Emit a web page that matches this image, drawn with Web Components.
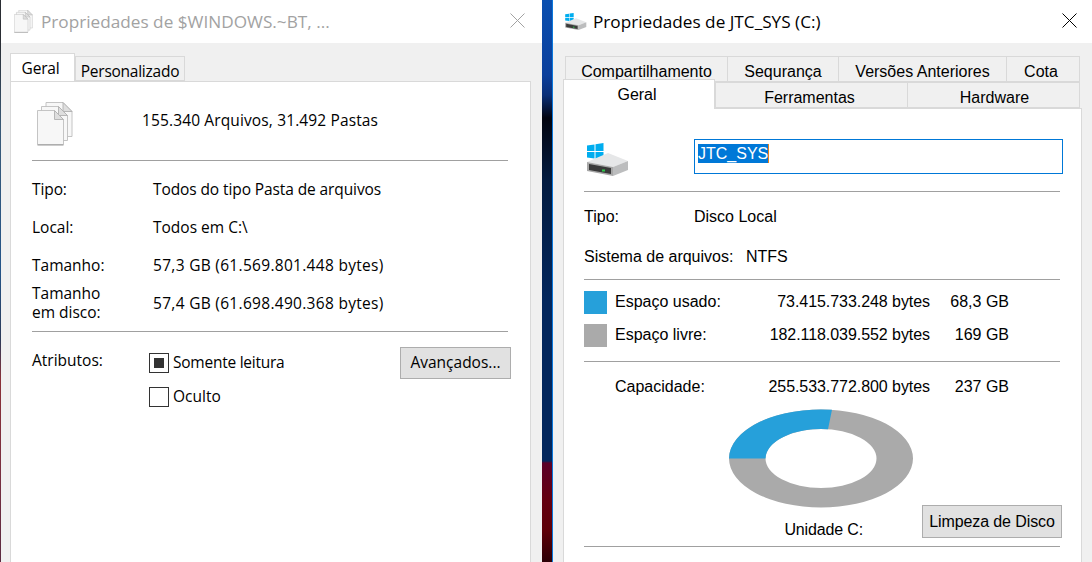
<!DOCTYPE html>
<html lang="pt">
<head>
<meta charset="utf-8">
<title>Propriedades</title>
<style>
  html, body { margin: 0; height: 100%; overflow: hidden; }
  body {
    display: flex;
    width: 1092px;
    height: 562px;
    background: linear-gradient(180deg, #0a4fb0 0, #0b3f9c 75px, #0a2f78 95px, #02040f 118px, #021b40 180px, #02265c 300px, #02265c 461px, #5a0028 463px, #640010 500px, #5e0008 530px, #2c0006 562px);
  }
  .left-edge {
    flex: 0 0 1px;
    background: linear-gradient(180deg, #2a2d33 0, #2a2d33 40px, #3a5a78 130px, #245488 270px, #2c3a58 340px, #8a3038 380px, #7a3040 470px, #5a2a40 562px);
  }
  .gap { flex: 0 0 10px; }
</style>
</head>
<body>
<div class="left-edge"></div>

<prop-window style="width:541px" inactive heading="Propriedades de $WINDOWS.~BT, ...">
  <files-icon slot="icon" size="small" style="margin-left:1px"></files-icon>

  <tab-strip style="margin:10px 0 0 9px;height:28px;align-items:flex-end;font-family:'Open Sans',sans-serif;font-size:15.5px">
    <prop-tab active style="width:65px;height:28px;padding:1px 4px 0 0;letter-spacing:-.2px">Geral</prop-tab>
    <prop-tab style="width:110px;height:25px;padding-top:4px;letter-spacing:-.25px">Personalizado</prop-tab>
  </tab-strip>

  <prop-panel style="margin-left:9px;width:521px;font-family:'Open Sans',sans-serif;font-size:15.5px">
    <div style="display:flex;align-items:center;height:78px;padding-left:26px;box-sizing:border-box">
      <files-icon style="margin:6px 69px 0 0"></files-icon>
      <span style="padding-bottom:2px;letter-spacing:.13px">155.340 Arquivos, 31.492 Pastas</span>
    </div>
    <prop-rule style="margin-left:21px;width:476px"></prop-rule>
    <prop-row label-width="121" style="margin:18px 0 0 21px;height:20px;letter-spacing:-.1px">
      <span slot="label">Tipo:</span>Todos do tipo Pasta de arquivos
    </prop-row>
    <prop-row label-width="121" style="margin:18px 0 0 21px;height:20px">
      <span slot="label">Local:</span>Todos em C:\
    </prop-row>
    <prop-row label-width="121" style="margin:18px 0 0 21px;height:20px">
      <span slot="label">Tamanho:</span><span style="letter-spacing:.3px">57,3 GB (61.569.801.448 bytes)</span>
    </prop-row>
    <prop-row label-width="121" style="margin:9px 0 0 21px;height:38px">
      <span slot="label" style="display:block;line-height:19px">Tamanho<br>em disco:</span><span style="letter-spacing:.3px">57,4 GB (61.698.490.368 bytes)</span>
    </prop-row>
    <prop-rule style="margin:9px 0 0 21px;width:476px"></prop-rule>
    <div style="display:flex;align-items:flex-start;margin:15px 0 0 21px;width:479px">
      <span style="width:117px;padding-top:2px">Atributos:</span>
      <div style="display:flex;flex-direction:column;gap:14px;padding-top:6px;flex:1">
        <check-box checked style="letter-spacing:-.25px">Somente leitura</check-box>
        <check-box>Oculto</check-box>
      </div>
      <push-button style="width:111px;height:32px;padding-bottom:2px">Avançados...</push-button>
    </div>
  </prop-panel>
</prop-window>

<div class="gap"></div>

<prop-window style="width:540px;border-left:1px solid #0a78dc" heading="Propriedades de JTC_SYS (C:)" close-gap="15">
  <drive-icon slot="icon" size="small"></drive-icon>

  <tab-strip style="margin:13px 0 0 12px;height:26px;font-family:'Liberation Sans',sans-serif;font-size:16px">
    <prop-tab style="width:163px;height:26px;padding-top:6px">Compartilhamento</prop-tab>
    <prop-tab style="width:112px;height:26px;margin-left:-1px;padding-top:6px">Sequrança</prop-tab>
    <prop-tab style="width:169px;height:26px;margin-left:-1px;padding-top:6px">Versões Anteriores</prop-tab>
    <prop-tab style="width:74px;height:26px;margin-left:-1px;padding:6px 4px 0 0">Cota</prop-tab>
  </tab-strip>
  <tab-strip style="margin:0 0 0 10px;height:26px;font-family:'Liberation Sans',sans-serif;font-size:16px">
    <prop-tab active style="width:152px;height:30px;margin-top:-3px;padding:1px 4px 0 0">Geral</prop-tab>
    <prop-tab style="width:193px;height:26px;padding:6px 4px 0 0">Ferramentas</prop-tab>
    <prop-tab style="width:173px;height:26px;margin-left:-1px;padding:6px 0 0 2px">Hardware</prop-tab>
  </tab-strip>

  <prop-panel style="margin-left:10px;width:519px;font-family:'Liberation Sans',sans-serif;font-size:16px">
    <div style="display:flex;align-items:flex-start;margin:30px 0 0 23px;height:35px">
      <drive-icon style="margin:4px 65px 0 0"></drive-icon>
      <name-field style="width:369px">JTC_SYS</name-field>
    </div>
    <prop-rule style="margin:17px 0 0 20px;width:476px"></prop-rule>
    <prop-row label-width="110" style="margin:15px 0 0 20px;height:20px">
      <span slot="label">Tipo:</span>Disco Local
    </prop-row>
    <prop-row label-width="162" style="margin:20px 0 0 20px;height:20px">
      <span slot="label">Sistema de arquivos:</span>NTFS
    </prop-row>
    <prop-rule style="margin:12px 0 0 20px;width:476px"></prop-rule>
    <space-row color="#26a0da" bytes="73.415.733.248 bytes" size="68,3 GB" style="margin-top:11px">Espaço usado:</space-row>
    <space-row color="#aaaaaa" bytes="182.118.039.552 bytes" size="169 GB" style="margin-top:10px">Espaço livre:</space-row>
    <prop-rule style="margin:14px 0 0 20px;width:476px"></prop-rule>
    <space-row bytes="255.533.772.800 bytes" size="237 GB" style="margin-top:14px">Capacidade:</space-row>
    <usage-donut style="margin:10px 0 0 164px"></usage-donut>
    <div style="display:flex;align-items:flex-end;margin:-4px 0 0 0;height:33px">
      <span style="width:358px;text-align:right;box-sizing:border-box;padding-right:59px;line-height:18px;margin-bottom:-1px;letter-spacing:-.15px;white-space:nowrap">Unidade C:</span>
      <push-button style="width:140px;height:33px;letter-spacing:-.1px">Limpeza de Disco</push-button>
    </div>
    <prop-rule style="margin:8px 0 0 20px;width:476px"></prop-rule>
  </prop-panel>
</prop-window>

<script>
// shared helper, every element just stamps its css + html in an open shadow root
class ShadowEl extends HTMLElement {
  constructor() {
    super();
    this.attachShadow({ mode: 'open' });
  }
  stamp(css, html) {
    this.shadowRoot.innerHTML = `<style>${css}</style>${html}`;
  }
}

class PropWindow extends ShadowEl {
  connectedCallback() {
    const inactive = this.hasAttribute('inactive');
    const closeGap = this.getAttribute('close-gap') || 17;
    this.stamp(`
      :host { display: flex; flex-direction: column; flex: none; height: 562px; overflow: hidden;
        background: #f0f0f0; box-sizing: border-box; color: #000; }
      .bar { display: flex; align-items: center; height: 43px; background: #fff; flex: none; }
      .icon { display: flex; width: 40px; padding-left: 12px; box-sizing: border-box; }
      .title { flex: 1; font: 17.2px 'Open Sans', sans-serif; white-space: nowrap;
        color: ${inactive ? '#a2a2a2' : '#000'}; }
      svg { flex: none; margin: 0 ${closeGap}px 2px 0; }
    `, `
      <div class="bar">
        <div class="icon"><slot name="icon"></slot></div>
        <div class="title">${this.getAttribute('heading')}</div>
        <svg width="15" height="15" viewBox="0 0 15 15"><path d="M.5.5l14 14M14.500.5l-14 14" stroke="${inactive ? '#a2a2a2' : '#000'}" fill="none"/></svg>
      </div>
      <slot></slot>
    `);
  }
}

class TabStrip extends ShadowEl {
  connectedCallback() {
    this.stamp(`:host { display: flex; flex: none; position: relative; }`, `<slot></slot>`);
  }
}

class PropTab extends ShadowEl {
  connectedCallback() {
    const active = this.hasAttribute('active');
    this.stamp(`
      :host { display: flex; align-items: center; justify-content: center; flex: none; box-sizing: border-box;
        border: 1px solid #d9d9d9; ${active ? 'border-bottom: 0; background: #fff; z-index: 2;' : 'background: #f0f0f0;'}
        white-space: nowrap; position: relative; }
    `, `<slot></slot>`);
  }
}

class PropPanel extends ShadowEl {
  connectedCallback() {
    this.stamp(`
      :host { display: block; flex: 1; box-sizing: border-box; background: #fff; border: 1px solid #d9d9d9; border-bottom: 0; }
    `, `<slot></slot>`);
  }
}

class PropRule extends ShadowEl {
  connectedCallback() {
    this.stamp(`:host { display: block; height: 1px; background: #a0a0a0; }`, ``);
  }
}

class PropRow extends ShadowEl {
  connectedCallback() {
    this.stamp(`
      :host { display: flex; align-items: center; white-space: nowrap; }
      .label { width: ${this.getAttribute('label-width')}px; flex: none; }
    `, `<div class="label"><slot name="label"></slot></div><div><slot></slot></div>`);
  }
}

class SpaceRow extends ShadowEl {
  connectedCallback() {
    const color = this.getAttribute('color');
    this.stamp(`
      :host { display: flex; align-items: center; height: 23px; padding-left: 20px; white-space: nowrap; }
      .swatch { width: 23px; height: 23px; flex: none; margin-right: 8px; }
      .name, .bytes, .size { flex: none; padding-bottom: 2px; }
      .name { width: 140px; }
      .bytes { width: 175px; text-align: right; letter-spacing: -.06px; }
      .size { width: 79px; text-align: right; }
    `, `
      <div class="swatch" style="background:${color || 'transparent'}"></div>
      <div class="name"><slot></slot></div>
      <div class="bytes">${this.getAttribute('bytes')}</div>
      <div class="size">${this.getAttribute('size')}</div>
    `);
  }
}

class CheckBox extends ShadowEl {
  connectedCallback() {
    this.stamp(`
      :host { display: flex; align-items: center; height: 20px; gap: 4px; white-space: nowrap; }
      .box { width: 20px; height: 20px; box-sizing: border-box; border: 1px solid #333; background: #fff;
        display: flex; align-items: center; justify-content: center; flex: none; }
      .mark { width: 10px; height: 10px; background: #333; }
      span { padding-bottom: 3px; }
    `, `<div class="box">${this.hasAttribute('checked') ? '<div class="mark"></div>' : ''}</div><span><slot></slot></span>`);
  }
}

class PushButton extends ShadowEl {
  connectedCallback() {
    this.stamp(`
      :host { display: flex; align-items: center; justify-content: center; flex: none; box-sizing: border-box;
        background: #e1e1e1; border: 1px solid #adadad; white-space: nowrap; }
    `, `<slot></slot>`);
  }
}

class NameField extends ShadowEl {
  connectedCallback() {
    this.stamp(`
      :host { display: flex; align-items: flex-start; height: 35px; box-sizing: border-box; border: 1px solid #0078d7;
        padding: 4px 0 0 3px; flex: none; background: #fff; }
      .sel { background: #0078d7; color: #fff; height: 19px; line-height: 19px; border-right: 1px solid #e8801a; }
    `, `<span class="sel"><slot></slot></span>`);
  }
}

class UsageDonut extends ShadowEl {
  connectedCallback() {
    this.stamp(`:host { display: block; width: 186px; height: 100px; } svg { display: block; }`, `
      <svg width="186" height="100" viewBox="0 0 186 100">
        <path fill-rule="evenodd" fill="#aaaaaa" d="M1 49.5a92 49 0 1 0 184 0a92 49 0 1 0-184 0zM37.500 49.500a55.500 29.500 0 1 1 111 0a55.500 29.500 0 1 1-111 0z"/>
        <path fill="#26a0da" d="M1 49.500A92 49 0 0 1 104 .8L100 20.300A55.500 29.500 0 0 0 37.500 49.500z"/>
      </svg>`);
  }
}

class FilesIcon extends ShadowEl {
  connectedCallback() {
    const small = this.getAttribute('size') === 'small';
    const w = small ? 19 : 36, h = small ? 23 : 44;
    const sheet = (x, y) => `<path d="M${x} ${y}h17l9 9v25h-26z" fill="#f7f7f7" stroke="#bdbdbd" stroke-width=".9"/><path d="M${x + 17} ${y}v9h9z" fill="#dedede" stroke="#b0b0b0" stroke-width=".9"/>`;
    this.stamp(`:host { display: block; flex: none; width: ${w}px; height: ${h}px; } svg { display: block; }`, `
      <svg width="${w}" height="${h}" viewBox="0 0 36 44">
        ${sheet(9, .5)}${sheet(4.500, 4.500)}${sheet(.5, 8.500)}
        <path d="M.5 43h26" stroke="#999" stroke-width="1"/>
      </svg>`);
  }
}

class DriveIcon extends ShadowEl {
  connectedCallback() {
    const small = this.getAttribute('size') === 'small';
    const w = small ? 22 : 42, h = small ? 17 : 33;
    this.stamp(`:host { display: block; flex: none; width: ${w}px; height: ${h}px; } svg { display: block; }`, `
      <svg width="${w}" height="${h}" viewBox="0 0 42 33">
        <path fill="#00adef" d="M0 2.500l7.500-1.100v6.600h-7.500zM8.500 1.200l8-1.200v8h-8zM0 9h7.500v6.600l-7.500-1.100zM8.500 9h8v8l-8-1.200z"/>
        <path fill="#e6e7e8" d="M0 19l21-9 20 8-15 6z"/>
        <path fill="#bcbdbe" d="M26 24l15-6v9l-15 6z"/>
        <path fill="#a8a8a8" d="M0 19l26 5v9l-26-5z"/>
        <path fill="#3a3a3a" d="M2 21l22 4v6l-22-4z"/>
        <rect x="15" y="26.500" width="3" height="2" fill="#2ec94b"/>
      </svg>`);
  }
}

customElements.define('prop-window', PropWindow);
customElements.define('tab-strip', TabStrip);
customElements.define('prop-tab', PropTab);
customElements.define('prop-panel', PropPanel);
customElements.define('prop-rule', PropRule);
customElements.define('prop-row', PropRow);
customElements.define('space-row', SpaceRow);
customElements.define('check-box', CheckBox);
customElements.define('push-button', PushButton);
customElements.define('name-field', NameField);
customElements.define('usage-donut', UsageDonut);
customElements.define('files-icon', FilesIcon);
customElements.define('drive-icon', DriveIcon);
</script>
</body>
</html>
